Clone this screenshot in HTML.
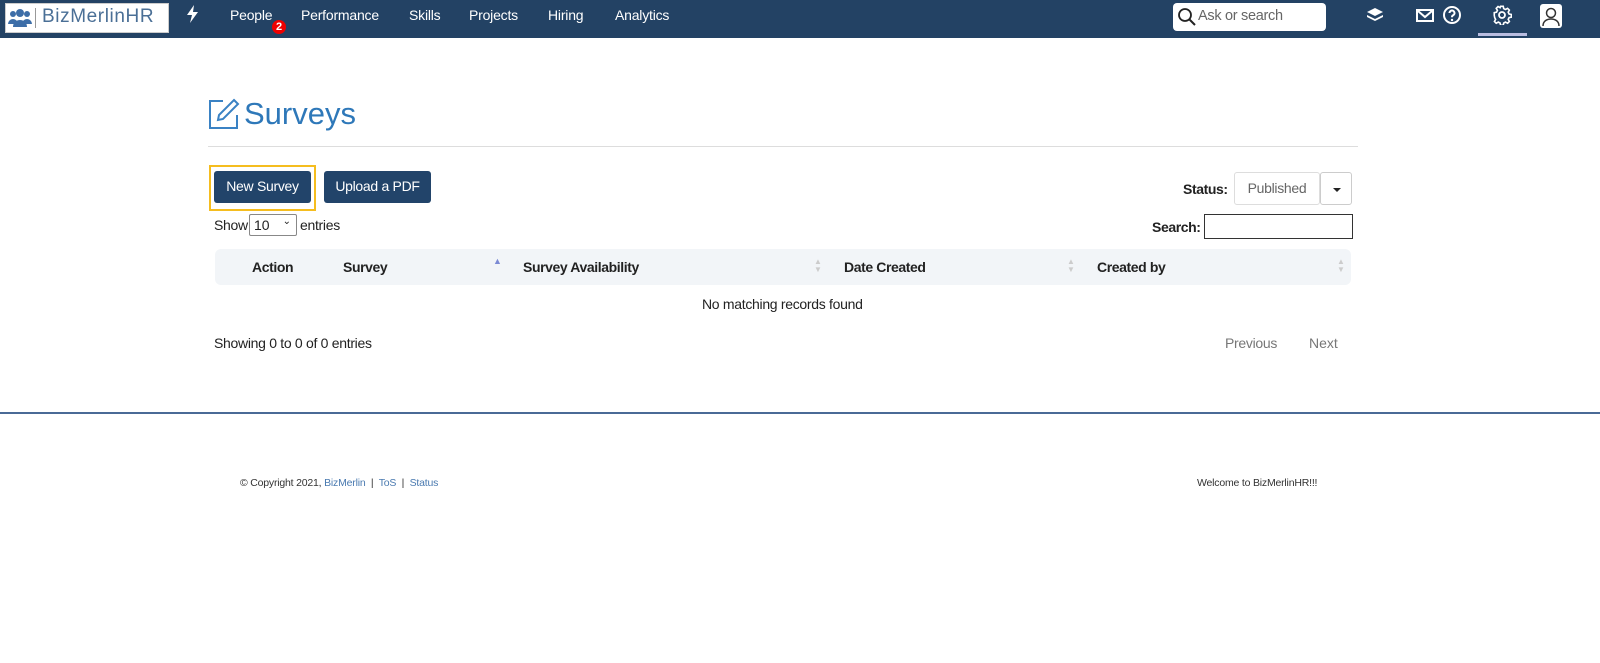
<!DOCTYPE html>
<html><head><meta charset="utf-8"><style>
*{box-sizing:border-box;margin:0;padding:0}
body{width:1600px;height:663px;background:#fff;font-family:"Liberation Sans",sans-serif;position:relative;overflow:hidden;color:#222}
.nav{position:absolute;left:0;top:0;width:1600px;height:38px;background:#234264}
.nav .it{position:absolute;top:7px;color:#fff;font-size:14px;letter-spacing:-0.2px}
.abs{position:absolute}
.btn{position:absolute;background:#22446a;color:#fff;font-size:14px;border-radius:3px;text-align:center;line-height:31px;height:32px;letter-spacing:-0.3px}
</style></head><body>
<div class="nav">
  <div class="abs" style="left:5px;top:3px;width:164px;height:30px;background:#fff;border:1px solid #ccc"></div>
  <svg class="abs" style="left:8px;top:8px" width="24" height="20" viewBox="0 0 24 20"><g fill="#3d6ea8"><circle cx="5" cy="6" r="3"/><circle cx="19" cy="6" r="3"/><circle cx="12" cy="5" r="4"/><path d="M0 16a5 5 0 0 1 10 0z"/><path d="M14 16a5 5 0 0 1 10 0z"/><path d="M5 19a7 7 0 0 1 14 0z"/></g></svg>
  <div class="abs" style="left:35px;top:8px;width:1px;height:20px;background:#999"></div>
  <div class="abs" style="left:42px;top:6px;color:#4a6f96;font-size:19px;letter-spacing:0.6px">BizMerlinHR</div>
  <svg class="abs" style="left:186px;top:5px" width="13" height="18" viewBox="0 0 13 18"><path d="M8 0 1 10h5l-2 8 8-11H7z" fill="#fff"/></svg>
  <div class="it" style="left:230px">People</div>
  <div class="abs" style="left:272px;top:20px;width:14px;height:14px;border-radius:7px;background:#e00;color:#fff;font-size:11px;font-weight:bold;text-align:center;line-height:14px">2</div>
  <div class="it" style="left:301px">Performance</div>
  <div class="it" style="left:409px">Skills</div>
  <div class="it" style="left:469px">Projects</div>
  <div class="it" style="left:548px">Hiring</div>
  <div class="it" style="left:615px">Analytics</div>
  <div class="abs" style="left:1173px;top:3px;width:153px;height:28px;background:#fff;border-radius:4px"></div>
  <svg class="abs" style="left:1177px;top:7px" width="20" height="20" viewBox="0 0 20 20"><circle cx="8" cy="8" r="6" fill="none" stroke="#222" stroke-width="1.8"/><path d="M12.5 12.5 18 18" stroke="#222" stroke-width="2"/></svg>
  <div class="abs" style="left:1198px;top:8px;color:#666;font-size:14.5px;letter-spacing:-0.3px">Ask or search</div>
  <svg class="abs" style="left:1366px;top:7px" width="18" height="16" viewBox="0 0 18 16"><g fill="#fff"><path d="M9 1 17 5 9 9 1 5z"/><path d="M1 8 9 12 17 8 17 10 9 14 1 10z"/></g></svg>
  <svg class="abs" style="left:1416px;top:9px" width="18" height="13" viewBox="0 0 18 13"><rect x="1" y="1" width="16" height="11" fill="none" stroke="#fff" stroke-width="2"/><path d="M2 2 9 8 16 2" fill="none" stroke="#fff" stroke-width="2"/></svg>
  <svg class="abs" style="left:1442px;top:5px" width="20" height="20" viewBox="0 0 20 20"><circle cx="10" cy="10" r="8" fill="none" stroke="#fff" stroke-width="2"/><path d="M7.5 8a2.5 2.5 0 1 1 3.5 2.3c-1 .5-1 1-1 2" fill="none" stroke="#fff" stroke-width="2"/><circle cx="10" cy="15" r="1.2" fill="#fff"/></svg>
  <svg class="abs" style="left:1492px;top:5px" width="20" height="20" viewBox="0 0 20 20"><path d="M8.5 1.5h3l.5 2.5 2 1 2.3-1.3 2 2-1.3 2.3 1 2 2.5.5v3l-2.5.5-1 2 1.3 2.3-2 2-2.3-1.3-2 1-.5 2.5h-3l-.5-2.5-2-1-2.3 1.3-2-2 1.3-2.3-1-2L1.5 11.5v-3L4 8l1-2-1.3-2.3 2-2L8 3z" transform="scale(.9) translate(1 0)" fill="none" stroke="#fff" stroke-width="1.8"/><circle cx="10" cy="10" r="3" fill="none" stroke="#fff" stroke-width="1.8"/></svg>
  <div class="abs" style="left:1478px;top:33px;width:49px;height:3px;background:#b9bde0"></div>
  <div class="abs" style="left:1540px;top:4px;width:22px;height:24px;background:#fff;border-radius:3px"></div>
  <svg class="abs" style="left:1542px;top:6px" width="18" height="20" viewBox="0 0 18 20"><circle cx="9" cy="7" r="4.5" fill="none" stroke="#333" stroke-width="1.5"/><path d="M1 20c0-5 4-7 8-7s8 2 8 7" fill="none" stroke="#333" stroke-width="1.5"/></svg>
</div>

<svg class="abs" style="left:208px;top:98px" width="32" height="32" viewBox="0 0 32 32"><path d="M15 3H2v27h27V17" fill="none" stroke="#3a82c4" stroke-width="2"/><path d="M26 2l4 4-15 15-5 1 1-5z" fill="none" stroke="#3a82c4" stroke-width="2"/></svg>
<div class="abs" style="left:244px;top:96px;font-size:31px;color:#2e78b9">Surveys</div>
<div class="abs" style="left:208px;top:146px;width:1150px;height:1px;background:#ddd"></div>

<div class="abs" style="left:209px;top:165px;width:107px;height:46px;border:2px solid #f5bd1f"></div>
<div class="btn" style="left:214px;top:171px;width:97px">New Survey</div>
<div class="btn" style="left:324px;top:171px;width:107px">Upload a PDF</div>

<div class="abs" style="left:214px;top:217px;font-size:14px;letter-spacing:-0.3px">Show</div>
<div class="abs" style="left:249px;top:214px;width:48px;height:22px;border:1px solid #888;border-radius:2px;font-size:14px;padding:2px 4px">10 <span style="position:absolute;right:5px;top:1px;font-size:10px">⌄</span></div>
<div class="abs" style="left:300px;top:217px;font-size:14px;letter-spacing:-0.3px">entries</div>

<div class="abs" style="left:1183px;top:181px;font-size:14px;font-weight:bold;letter-spacing:-0.4px">Status:</div>
<div class="abs" style="left:1234px;top:172px;width:86px;height:33px;border:1px solid #ddd;border-radius:3px;font-size:14px;color:#666;text-align:center;line-height:31px;letter-spacing:-0.3px">Published</div>
<div class="abs" style="left:1320px;top:172px;width:32px;height:33px;border:1px solid #ccc;border-radius:3px"><div style="position:absolute;left:12px;top:15px;border:4px solid transparent;border-top:4px solid #222;border-bottom:0"></div></div>
<div class="abs" style="left:1152px;top:219px;font-size:14px;font-weight:bold;letter-spacing:-0.4px">Search:</div>
<div class="abs" style="left:1204px;top:214px;width:149px;height:25px;border:1px solid #333"></div>

<div class="abs" style="left:215px;top:249px;width:1136px;height:36px;background:#f2f5f8;border-radius:6px"></div>
<div class="abs" style="left:252px;top:259px;font-size:14px;font-weight:bold;letter-spacing:-0.4px">Action</div>
<div class="abs" style="left:343px;top:259px;font-size:14px;font-weight:bold;letter-spacing:-0.4px">Survey</div>
<div class="abs" style="left:493px;top:256px;font-size:9px;color:#7b8ad4">▲</div>
<div class="abs" style="left:523px;top:259px;font-size:14px;font-weight:bold;letter-spacing:-0.4px">Survey Availability</div>
<div class="abs" style="left:844px;top:259px;font-size:14px;font-weight:bold;letter-spacing:-0.4px">Date Created</div>
<div class="abs" style="left:1097px;top:259px;font-size:14px;font-weight:bold;letter-spacing:-0.4px">Created by</div>
<div class="abs" style="left:814px;top:258px;font-size:8px;color:#ccc;line-height:8px">▲<br>▼</div>
<div class="abs" style="left:1067px;top:258px;font-size:8px;color:#ccc;line-height:8px">▲<br>▼</div>
<div class="abs" style="left:1337px;top:258px;font-size:8px;color:#ccc;line-height:8px">▲<br>▼</div>
<div class="abs" style="left:702px;top:296px;font-size:14px;letter-spacing:-0.3px">No matching records found</div>

<div class="abs" style="left:214px;top:335px;font-size:14px;letter-spacing:-0.3px">Showing 0 to 0 of 0 entries</div>
<div class="abs" style="left:1225px;top:335px;font-size:14px;color:#777;letter-spacing:-0.3px">Previous</div>
<div class="abs" style="left:1309px;top:335px;font-size:14px;color:#777">Next</div>

<div class="abs" style="left:0;top:412px;width:1600px;height:2px;background:#4a6a96"></div>
<div class="abs" style="left:240px;top:477px;font-size:10.5px;color:#333;letter-spacing:-0.2px">© Copyright 2021, <span style="color:#4a7ab0">BizMerlin</span> &nbsp;|&nbsp; <span style="color:#4a7ab0">ToS</span> &nbsp;|&nbsp; <span style="color:#4a7ab0">Status</span></div>
<div class="abs" style="left:1197px;top:477px;font-size:10.5px;color:#333;letter-spacing:-0.2px">Welcome to BizMerlinHR!!!</div>
</body></html>
